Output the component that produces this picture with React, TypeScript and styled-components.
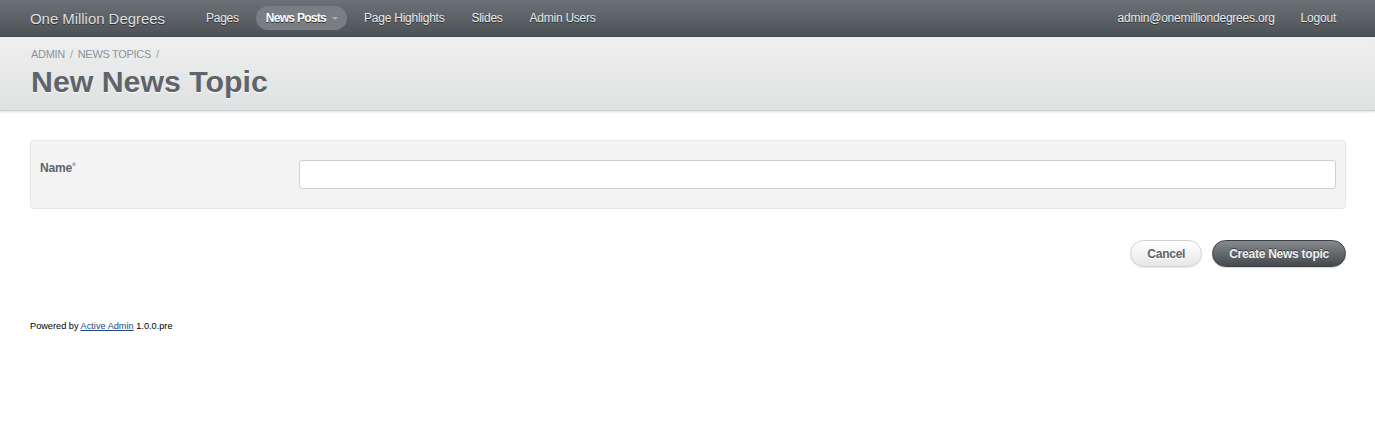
import React from "react";
import styled, { createGlobalStyle } from "styled-components";

const Global = createGlobalStyle`
  html, body { margin: 0; padding: 0; background: #fff; }
  body {
    font-family: "Liberation Sans", Arial, Helvetica, sans-serif;
    color: #323537;
    font-size: 12px;
  }
  * { box-sizing: border-box; }
`;

const Header = styled.div`
  height: 37px;
  display: flex;
  align-items: center;
  padding: 0 29px 0 30px;
  background: linear-gradient(180deg, #6b7175 0%, #4d5256 100%);
  border-bottom: 1px solid #45494c;
  text-shadow: 0 1px 0 #2f3234;
`;

const SiteTitle = styled.h1`
  margin: 0 31px 0 0;
  font-size: 15px;
  font-weight: normal;
  color: #dcdedf;
  letter-spacing: -0.05px;
`;

const Nav = styled.ul`
  display: flex;
  align-items: center;
  list-style: none;
  margin: 0;
  padding: 0;
  gap: 7px;
  flex: 1;
`;

const NavItem = styled.li<{ $current?: boolean }>`
  display: flex;
  align-items: center;
  height: 24px;
  padding: 0 ${(p) => (p.$current ? "9px 0 10px" : "10px")};
  border-radius: 12px;
  font-size: 12px;
  font-weight: ${(p) => (p.$current ? "bold" : "normal")};
  color: ${(p) => (p.$current ? "#ffffff" : "#e8e9ea")};
  background: ${(p) => (p.$current ? "#797e82" : "transparent")};
  letter-spacing: ${(p) => (p.$current ? "-0.7px" : "-0.25px")};
`;

const Caret = styled.span`
  display: inline-block;
  width: 0;
  height: 0;
  margin-left: 6px;
  border-left: 3px solid transparent;
  border-right: 3px solid transparent;
  border-top: 3px solid #a9adb0;
`;

const Utility = styled.ul`
  display: flex;
  align-items: center;
  list-style: none;
  margin: 0;
  padding: 0;
  gap: 6px;
  font-size: 12px;
  color: #e8e9ea;
  letter-spacing: -0.22px;
  li { padding: 0 10px; }
`;

const TitleBar = styled.div`
  height: 74px;
  padding: 11px 30px 0 31px;
  background: linear-gradient(180deg, #efefef 0%, #dfe1e2 100%);
  border-bottom: 1px solid #cdcdcd;
  box-shadow: 0 1px 2px rgba(0, 0, 0, 0.12);
`;

const Breadcrumb = styled.div`
  font-size: 11px;
  color: #8a949e;
  text-transform: uppercase;
  letter-spacing: -0.3px;
  span { margin: 0 5px; color: #9aa3ab; }
`;

const PageTitle = styled.h2`
  margin: 4px 0 0 0;
  font-size: 30.3px;
  font-weight: bold;
  color: #5e6469;
  text-shadow: 0 1px 0 #ffffff;
  line-height: 36px;
`;

const Main = styled.div`
  padding: 29px 29px 0 30px;
`;

const Fieldset = styled.div`
  background: #f4f4f4;
  border: 1px solid #e6e6e6;
  border-radius: 4px;
  padding: 19px 9px 19px 9px;
  display: grid;
  grid-template-columns: 259px 1fr;
  align-items: start;
`;

const Label = styled.label`
  font-size: 12px;
  font-weight: bold;
  color: #5e6469;
  letter-spacing: -0.2px;
  padding-top: 1px;
  abbr { color: #aaaaaa; font-weight: bold; text-decoration: none; font-size: 10px; vertical-align: 2px; }
`;

const Input = styled.input`
  height: 29px;
  width: 100%;
  border: 1px solid #c9d0d6;
  border-radius: 3px;
  background: #fff;
  outline: none;
`;

const Actions = styled.div`
  display: flex;
  justify-content: flex-end;
  gap: 10px;
  margin-top: 31px;
`;

const Button = styled.button<{ $primary?: boolean }>`
  height: 27px;
  border-radius: 14px;
  font-family: "Liberation Sans", Arial, sans-serif;
  font-size: 12px;
  font-weight: bold;
  padding: 0 16px;
  letter-spacing: -0.25px;
  cursor: pointer;
  color: ${(p) => (p.$primary ? "#efefef" : "#5e6469")};
  border: 1px solid ${(p) => (p.$primary ? "#3c4044" : "#d0d0d0")};
  background: ${(p) =>
    p.$primary
      ? "linear-gradient(180deg, #858a8f 0%, #45494d 100%)"
      : "linear-gradient(180deg, #ffffff 0%, #e7e7e7 100%)"};
  box-shadow: ${(p) =>
    p.$primary ? "0 1px 1px rgba(0,0,0,0.15)" : "0 1px 1px rgba(0,0,0,0.08)"};
  text-shadow: ${(p) => (p.$primary ? "0 -1px 0 #3a3d40" : "0 1px 0 #fff")};
`;

const Footer = styled.div`
  padding: 54px 30px 0 30px;
  font-size: 9.2px;
  color: #000;
  a { color: #1b4a7a; text-decoration: underline; }
`;

export default function App() {
  return (
    <>
      <Global />
      <Header>
        <SiteTitle>One Million Degrees</SiteTitle>
        <Nav>
          <NavItem>Pages</NavItem>
          <NavItem $current>
            News Posts
            <Caret />
          </NavItem>
          <NavItem>Page Highlights</NavItem>
          <NavItem>Slides</NavItem>
          <NavItem>Admin Users</NavItem>
        </Nav>
        <Utility>
          <li>admin@onemilliondegrees.org</li>
          <li>Logout</li>
        </Utility>
      </Header>
      <TitleBar>
        <Breadcrumb>
          Admin<span>/</span>News Topics<span>/</span>
        </Breadcrumb>
        <PageTitle>New News Topic</PageTitle>
      </TitleBar>
      <Main>
        <Fieldset>
          <Label>
            Name<abbr>*</abbr>
          </Label>
          <Input type="text" />
        </Fieldset>
        <Actions>
          <Button>Cancel</Button>
          <Button $primary>Create News topic</Button>
        </Actions>
      </Main>
      <Footer>
        Powered by <a href="#">Active Admin</a> 1.0.0.pre
      </Footer>
    </>
  );
}
